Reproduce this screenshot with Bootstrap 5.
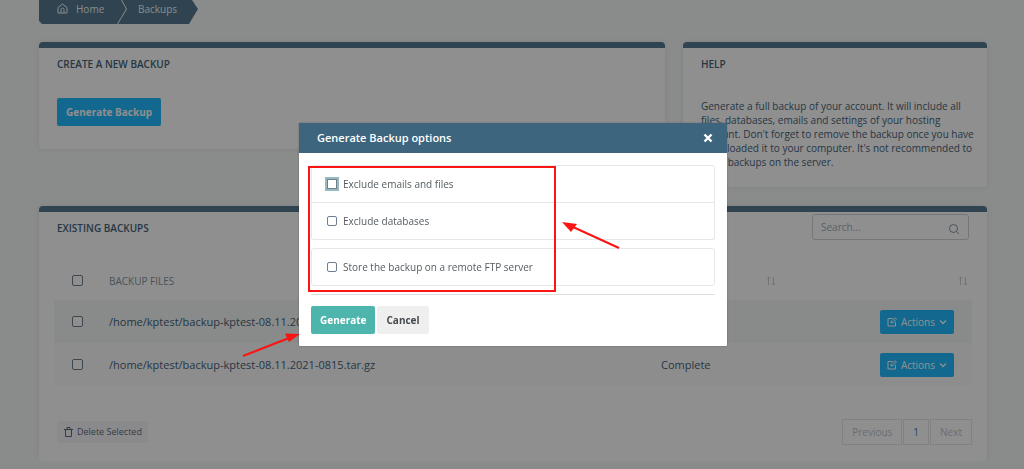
<!DOCTYPE html>
<html lang="en">
<head>
<meta charset="utf-8">
<meta name="viewport" content="width=device-width, initial-scale=1">
<title>Backups</title>
<link href="https://cdn.jsdelivr.net/npm/bootstrap@5.3.0/dist/css/bootstrap.min.css" rel="stylesheet">
<style>
  body { font-family: "Open Sans", "Noto Sans", sans-serif; font-size: 10px; line-height: 14px; color: #46637a; background: #f7faf8; overflow: hidden; }
  svg { display: block; flex: none; }
  .page { padding: 0 37px 0 39px; }
  .top-row { --bs-gutter-x: 18px; margin-top: 18px; margin-bottom: 19px; }

  .crumbs a { height: 24px; background: #54788f; color: #f2f7fa; text-decoration: none; padding-bottom: 7px; }
  .crumb-home { padding-left: 18px; width: 87px; gap: 8px; clip-path: polygon(0 0, 82px 0, 100% 9px, 78px 100%, 3px 100%, 0 21px); }
  .crumbs .crumb-current { width: 81px; padding-left: 21px; margin-left: -9px; clip-path: polygon(5px 0, 75px 0, 100% 9px, 72px 100%, 1px 100%, 10px 9px); }

  .panel { background: #fff; border-top: 6px solid #54788f; border-radius: 4px; padding: 9px 18px 18px; box-shadow: 0 0 6px rgba(70, 70, 120, .12); }
  .panel h2 { font-size: 10px; line-height: 14px; font-weight: 600; margin: 0; color: #46637a; }
  .panel-create { min-height: 107px; }
  .panel-create .btn { margin-top: 27px; }
  .panel-help { padding-right: 12px; }
  .panel-help p { margin: 28px 0 0; }
  .btn { --bs-btn-font-size: 10px; line-height: 14px; border-radius: 2px; border: 0; }
  .btn-blue, .btn-blue:hover { background: #22b9ff; color: #fff; }
  .btn-main { font-weight: 700; padding: 7px 9px; }
  .btn-actions { padding: 5px 7px; }

  .form-check-input { width: 11px; height: 11px; margin: 0; border: 1px solid #6f7f8d; border-radius: 2px !important; float: none; flex: none; display: block; }
  .search { width: 157px; margin-top: -7px; position: relative; }
  .search input { font-size: 10px; line-height: 14px; padding: 5px 8px; height: 26px; border: 1px solid #cfd5d9; border-radius: 3px; }
  .search input::placeholder { color: #a3adb5; }
  .search svg { position: absolute; right: 9px; top: 9px; }

  .backups { margin: 21px -3px 0; width: calc(100% + 6px); table-layout: fixed; color: #46637a; font-size: 11px; line-height: 18px; }
  .backups th { font-size: 10px; font-weight: 400; color: #8694a0; height: 39px; padding: 0; }
  .backups td { height: 43px; padding: 0; }
  .backups th:first-child, .backups td:first-child { width: 55px; padding-left: 18px; }
  .backups tbody tr:nth-child(odd) { background: #f4f7f6; }
  .backups tbody tr:nth-child(even) { background: #fcfcfc; }
  .status-col { width: 115px; }
  .actions-col { width: 196px; }
  .backups td.actions { padding-right: 18px; }
  .table-foot { margin: 33px -3px 0 0; }
  .delete { background: #f6f7f9; color: #5c6d7e; padding: 4px 6px 4px 7px; font-size: 9px; }
  .pagination { gap: 1px; }
  .page-link { font-size: 10px; line-height: 14px; padding: 5px 9px; border-color: #e4e7e9; color: #3f7fa5; border-radius: 0 !important; margin: 0 !important; }
  .page-item.disabled .page-link { color: #bcc5cc; background: #fff; border-color: #e4e7e9; }

  .modal { display: block; padding-left: 2px; overflow: hidden; background: rgba(0, 0, 0, .44); }
  .modal-dialog { max-width: 428px; margin: 123px auto 0; }
  .modal-content { border: 0; border-radius: 1px; box-shadow: 0 0 2px rgba(0, 0, 0, .3); color: #545c61; }
  .modal-header { background: #3d657d; border: 0; border-radius: 0; padding: 6px 13px 6px 18px; height: 30px; }
  .modal-title { font-size: 11px; line-height: 18px; font-weight: 600; color: #fff; }
  .close-x { background: none; border: 0; padding: 0; color: #fff; width: 12px; height: 12px; }
  .modal-body { padding: 12px; }
  .list-group { border-radius: 3px; }
  .list-group-item { display: flex; align-items: center; gap: 6px; padding: 11px 15px; border-color: #e5e8e9; color: inherit; font-size: 10px; }
  .list-group-item .form-check-input { width: 10px; height: 10px; }
  .list-group-item .form-check-input.is-focused { outline: 2px solid #97b9c0; box-shadow: none; border-radius: 0 !important; }
  .modal-body hr { margin: 8px 0 11px; color: #dfdfdf; opacity: 1; }
  .modal-actions { gap: 2px; }
  .btn-teal, .btn-teal:hover { background: #4eb5ac; color: #fff; }
  .btn-plain, .btn-plain:hover { background: #f0eff0; color: #454a4e; }
  .marks { position: absolute; left: 0; top: 0; overflow: visible; pointer-events: none; }
</style>
</head>
<body>
<main class="page">
  <nav class="crumbs d-flex" aria-label="Breadcrumb">
    <a href="#" class="crumb-home d-flex align-items-center">
      <svg width="11" height="11" viewBox="0 0 11 11" fill="none" stroke="currentColor"><path d="M1 4.500 5.500 1 10 4.500V10H1zM4 10V6.500q0-1.500 1.500-1.500T7 6.500V10"/></svg>
      Home
    </a>
    <a href="#" class="crumb-current d-flex align-items-center">Backups</a>
  </nav>

  <div class="row align-items-start top-row">
    <div class="col-8">
      <section class="panel panel-create">
        <h2>CREATE A NEW BACKUP</h2>
        <button class="btn btn-blue btn-main" type="button">Generate Backup</button>
      </section>
    </div>
    <div class="col-4">
      <section class="panel panel-help">
        <h2>HELP</h2>
        <p>Generate a full backup of your account. It will include all files, databases, emails and settings of your hosting account. Don't forget to remove the backup once you have downloaded it to your computer. It's not recommended to store backups on the server.</p>
      </section>
    </div>
  </div>

  <section class="panel pb-3">
    <div class="d-flex justify-content-between">
      <h2>EXISTING BACKUPS</h2>
      <div class="search">
        <input class="form-control" type="search" placeholder="Search..." aria-label="Search backups">
        <svg width="12" height="12" viewBox="0 0 12 12" fill="none" stroke="#8495a1"><circle cx="5.500" cy="5.500" r="4"/><path d="m8.500 8.500 2.500 2.500"/></svg>
      </div>
    </div>
    <table class="backups align-middle">
      <thead>
        <tr>
          <th><input class="form-check-input" type="checkbox" aria-label="Select all backups"></th>
          <th>BACKUP FILES</th>
          <th class="status-col"><svg class="ms-auto" width="10" height="10" viewBox="0 0 10 10" fill="none" stroke="#c5cdd2"><path d="M2.500 9V1M1 2.500 2.500 1 4 2.500M7.500 1v8M6 7.500 7.500 9 9 7.500"/></svg></th>
          <th class="actions-col"><svg class="ms-auto me-1" width="10" height="10" viewBox="0 0 10 10" fill="none" stroke="#c5cdd2"><path d="M2.500 9V1M1 2.500 2.500 1 4 2.500M7.500 1v8M6 7.500 7.500 9 9 7.500"/></svg></th>
        </tr>
      </thead>
      <tbody>
        <tr>
          <td><input class="form-check-input" type="checkbox" aria-label="Select first backup"></td>
          <td>/home/kptest/backup-kptest-08.11.2021-0828.tar.gz</td>
          <td>Complete</td>
          <td class="actions"><button class="btn btn-blue btn-actions d-flex align-items-center ms-auto" type="button">
            <svg class="me-1" width="10" height="10" viewBox="0 0 10 10" fill="none" stroke="currentColor"><path d="M5.500 1.500H1v7.500h7.500V5M4 6l.5-2L8 .7 9.500 2.200 6 5.500z"/></svg>Actions<svg class="ms-1" width="8" height="8" viewBox="0 0 8 8" fill="none" stroke="currentColor" stroke-width="1.300"><path d="m1 2.500 3 3 3-3"/></svg></button></td>
        </tr>
        <tr>
          <td><input class="form-check-input" type="checkbox" aria-label="Select second backup"></td>
          <td>/home/kptest/backup-kptest-08.11.2021-0815.tar.gz</td>
          <td>Complete</td>
          <td class="actions"><button class="btn btn-blue btn-actions d-flex align-items-center ms-auto" type="button">
            <svg class="me-1" width="10" height="10" viewBox="0 0 10 10" fill="none" stroke="currentColor"><path d="M5.500 1.500H1v7.500h7.500V5M4 6l.5-2L8 .7 9.500 2.200 6 5.500z"/></svg>Actions<svg class="ms-1" width="8" height="8" viewBox="0 0 8 8" fill="none" stroke="currentColor" stroke-width="1.300"><path d="m1 2.500 3 3 3-3"/></svg></button></td>
        </tr>
      </tbody>
    </table>
    <div class="table-foot d-flex justify-content-between align-items-center">
      <button class="btn delete d-flex align-items-center gap-1" type="button">
        <svg width="9" height="10" viewBox="0 0 9 10" fill="none" stroke="currentColor"><path d="M0 2.500h9M1.500 2.500v7h6v-7M3 2V.5h3V2"/></svg>Delete Selected</button>
      <ul class="pagination mb-0">
        <li class="page-item disabled"><a class="page-link" href="#">Previous</a></li>
        <li class="page-item"><a class="page-link" href="#">1</a></li>
        <li class="page-item disabled"><a class="page-link" href="#">Next</a></li>
      </ul>
    </div>
  </section>
</main>

<div class="modal" role="dialog" aria-modal="true" aria-labelledby="optionsTitle">
  <div class="modal-dialog">
    <form class="modal-content">
      <div class="modal-header">
        <h1 class="modal-title" id="optionsTitle">Generate Backup options</h1>
        <button class="close-x" type="button" aria-label="Close"><svg width="12" height="12" viewBox="0 0 12 12" stroke="currentColor" stroke-width="2.400"><path d="m2.500 2.500 7 7m0-7-7 7"/></svg></button>
      </div>
      <div class="modal-body">
        <div class="list-group mb-2">
          <label class="list-group-item"><input class="form-check-input is-focused" type="checkbox">Exclude emails and files</label>
          <label class="list-group-item"><input class="form-check-input" type="checkbox">Exclude databases</label>
        </div>
        <div class="list-group">
          <label class="list-group-item"><input class="form-check-input" type="checkbox">Store the backup on a remote FTP server</label>
        </div>
        <hr>
        <div class="modal-actions d-flex">
          <button class="btn btn-teal btn-main" type="button">Generate</button>
          <button class="btn btn-plain btn-main" type="button">Cancel</button>
        </div>
      </div>
      <svg class="marks" width="428" height="222" viewBox="0 0 428 222" fill="none" stroke="#fa1414" stroke-width="2" aria-hidden="true">
        <path d="M10 44h246v124H10z"/>
        <path d="m320 125-46-21M-56 233l46-18"/>
        <path fill="#fa1414" stroke="none" d="m263 99 15 2-6 8zM1 211l-15-.5 4 8.500z"/>
      </svg>
    </form>
  </div>
</div>
<script src="https://cdn.jsdelivr.net/npm/bootstrap@5.3.0/dist/js/bootstrap.bundle.min.js"></script>
</body>
</html>
